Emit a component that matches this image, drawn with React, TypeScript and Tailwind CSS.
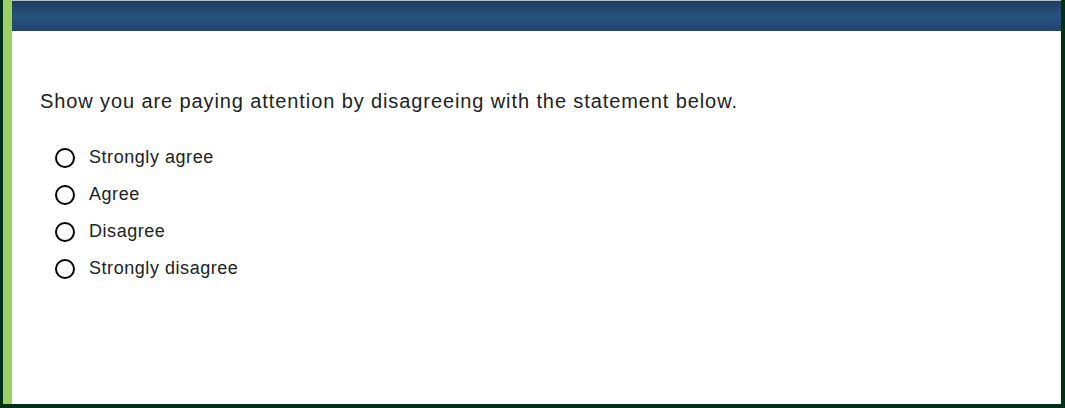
import React from "react";

const options = ["Strongly agree", "Agree", "Disagree", "Strongly disagree"];

export default function App() {
  return (
    <div className="w-[1065px] h-[408px] bg-[#003018] pr-[4px] pb-[4px] pl-[3px] flex" style={{ fontFamily: '"Liberation Sans", Arial, sans-serif' }}>
      <div className="w-[9px] bg-[#9ccf64]" />
      <div className="flex-1 flex flex-col bg-white">
        <div className="h-[1px] bg-[#b8bec6]" />
        <div className="h-[30px] bg-[linear-gradient(to_bottom,#1f3d5f_0%,#27527e_50%,#224670_100%)]" />
        <div className="pl-[28px] pt-[58px]">
          <div className="text-[20px] leading-[24px] tracking-[0.9px] text-[#222]">
            Show you are paying attention by disagreeing with the statement below.
          </div>
          <div className="mt-[26px] flex flex-col">
            {options.map((o) => (
              <label key={o} className="flex items-center h-[37px] pl-[15px]">
                <span className="w-[20px] h-[20px] rounded-full border-2 border-black box-border" />
                <span className="ml-[14px] text-[18px] tracking-[0.55px] text-[#222]">{o}</span>
              </label>
            ))}
          </div>
        </div>
      </div>
    </div>
  );
}
